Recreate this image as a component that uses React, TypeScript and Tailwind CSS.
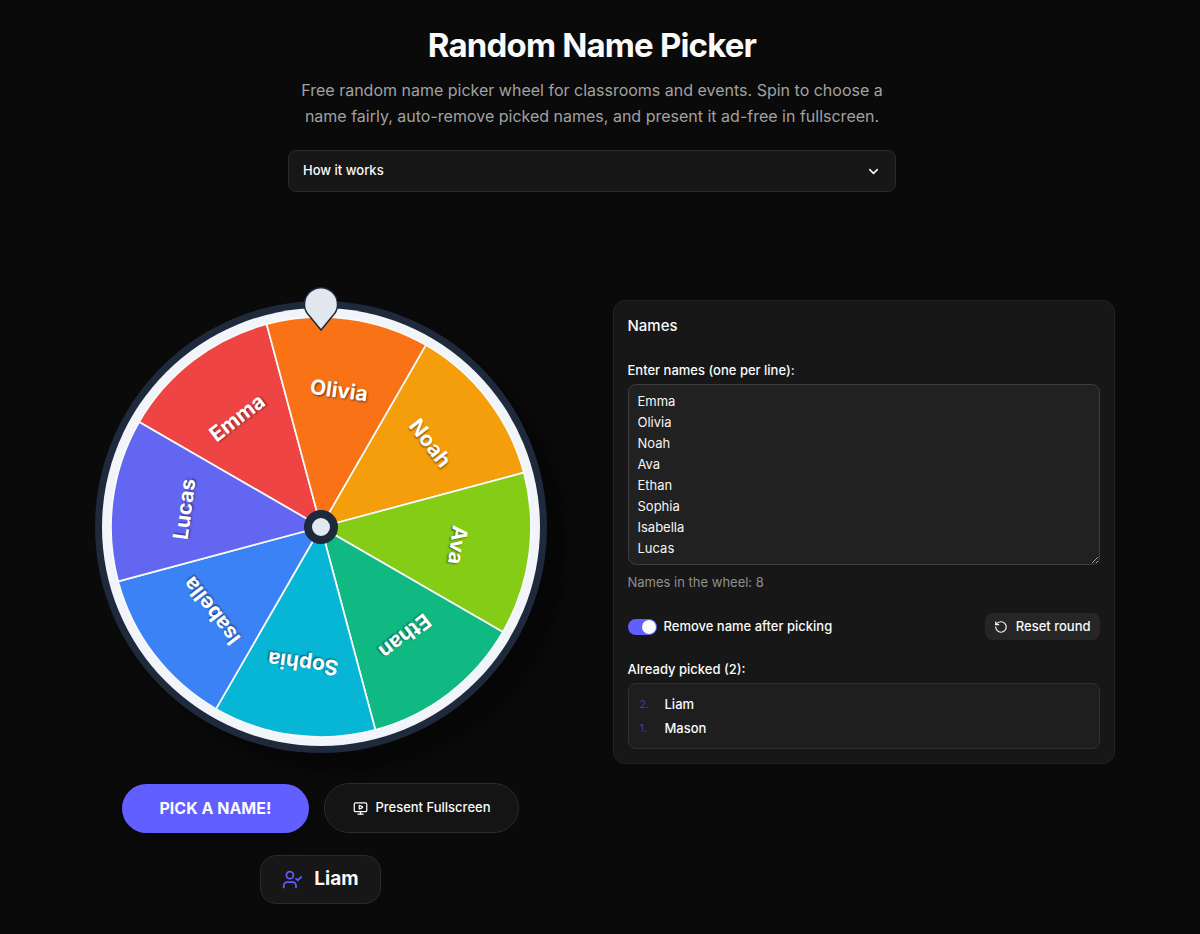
import React, { useState } from "react";
import { ChevronDown, MonitorPlay, RotateCcw, UserCheck } from "lucide-react";

const names = [
  { name: "Emma", color: "#ef4444" },
  { name: "Olivia", color: "#f97316" },
  { name: "Noah", color: "#f59e0b" },
  { name: "Ava", color: "#84cc16" },
  { name: "Ethan", color: "#10b981" },
  { name: "Sophia", color: "#06b6d4" },
  { name: "Isabella", color: "#3b82f6" },
  { name: "Lucas", color: "#6366f1" },
];

const picked = ["Mason", "Liam"];

// point on a circle, 0deg is up and the angle grows clockwise
const point = (angle: number, r: number) => {
  const rad = ((angle - 90) * Math.PI) / 180;
  return `${(r * Math.cos(rad)).toFixed(2)} ${(r * Math.sin(rad)).toFixed(2)}`;
};

const Wheel = () => {
  const step = 360 / names.length;
  const start = -60;
  return (
    <svg
      viewBox="-226 -226 452 452"
      className="w-full max-w-[452px] overflow-visible"
      role="img"
      aria-label="Name wheel"
    >
      <circle
        r="226"
        fill="#1e293b"
        className="drop-shadow-[20px_18px_6px_rgba(0,0,0,0.4)]"
      />
      <circle r="219" fill="#f1f5f9" />
      {names.map(({ name, color }, i) => {
        const from = start + i * step;
        const mid = from + step / 2;
        return (
          <g key={name}>
            <path
              d={`M0 0L${point(from, 210)}A210 210 0 0 1 ${point(from + step, 210)}Z`}
              fill={color}
              stroke="#f8fafc"
              strokeWidth="1.7"
            />
            <g transform={`rotate(${mid})`}>
              <text
                y="-138"
                textAnchor="middle"
                dominantBaseline="central"
                fill="#fff"
                className="text-[21px] font-bold [text-shadow:1px_1px_2px_rgba(0,0,0,0.5)]"
              >
                {name}
              </text>
            </g>
          </g>
        );
      })}
      <circle r="13" fill="#e2e8f0" stroke="#1e293b" strokeWidth="8" />
      <path
        d="M0 -197L-14 -214A16.5 16.5 0 1 1 14 -214Z"
        fill="#e2e8f0"
        stroke="#1e293b"
        strokeWidth="1.5"
      />
    </svg>
  );
};

const NamesCard = () => {
  const [text, setText] = useState(names.map((n) => n.name).join("\n"));
  return (
    <div className="self-start rounded-xl border border-[#222222] bg-[#171717] p-3.5">
      <h2 className="text-[15px] leading-[22px] font-medium">Names</h2>
      <label
        htmlFor="names"
        className="mt-6 block text-[13px] leading-[18px] font-medium"
      >
        Enter names (one per line):
      </label>
      <textarea
        id="names"
        value={text}
        onChange={(e) => setText(e.target.value)}
        className="mt-[5px] block h-[181px] w-full overflow-hidden rounded-lg border border-[#3d3d3d] bg-[#212121] px-[9px] py-1.5 text-[13px] leading-[21px] text-[#f5f5f5] outline-none"
      />
      <p className="mt-2 text-[13px] leading-[18px] text-[#8f8f8f]">
        Names in the wheel: {names.length}
      </p>
      <div className="mt-[22px] flex items-center justify-between">
        <label className="flex items-center gap-[7px] text-[13px] font-medium">
          <span className="relative flex">
            <input
              type="checkbox"
              role="switch"
              defaultChecked
              className="peer h-4 w-[29px] appearance-none rounded-full bg-[#3a3a3a] checked:bg-[#615fff]"
            />
            <span className="pointer-events-none absolute top-px left-px size-3.5 rounded-full bg-[#fafafa] peer-checked:left-3.5" />
          </span>
          Remove name after picking
        </label>
        <button className="flex h-[27px] items-center gap-2 rounded-lg bg-[#262626] px-[9px] text-[13px] font-medium">
          <RotateCcw className="size-3.5" />
          Reset round
        </button>
      </div>
      <h3 className="mt-5 text-[13px] leading-[18px] font-medium">
        Already picked ({picked.length}):
      </h3>
      <ol
        reversed
        className="mt-[5px] rounded-lg border border-[#303030] bg-[#1e1e1e] px-[11px] py-2 text-[13px] leading-6 font-medium"
      >
        {[...picked].reverse().map((name, i) => (
          <li key={name} className="flex items-center">
            <span className="w-[25px] text-[11px] font-normal text-[#3d3bb0]">
              {picked.length - i}.
            </span>
            {name}
          </li>
        ))}
      </ol>
    </div>
  );
};

const App = () => {
  return (
    <div className="min-h-screen bg-[#0a0a0a] pr-4 font-['Inter',sans-serif] text-[#fafafa]">
      <header className="mx-auto flex max-w-[608px] flex-col items-center pt-6 text-center">
        <h1 className="text-[33px] leading-[42px] font-bold tracking-tight">
          Random Name Picker
        </h1>
        <p className="mt-[11px] text-[16px] leading-[26px] text-[#a1a1a1]">
          Free random name picker wheel for classrooms and events. Spin to
          choose a name fairly, auto-remove picked names, and present it ad-free
          in fullscreen.
        </p>
        <button className="mt-[21px] flex h-[42px] w-full items-center justify-between rounded-lg border border-[#2a2a2a] bg-[#171717] px-3.5 text-[13px] font-medium">
          How it works
          <ChevronDown className="size-[15px]" strokeWidth={2.5} />
        </button>
      </header>
      <main className="mx-auto mt-[108px] grid max-w-[1045px] grid-cols-2 gap-[41px]">
        <section className="flex flex-col items-center pt-px">
          <Wheel />
          <div className="mt-[30px] flex items-center gap-[15px]">
            <button className="h-[49px] rounded-full bg-[#615fff] px-[38px] text-[16px] font-bold shadow-lg">
              PICK A NAME!
            </button>
            <button className="flex h-[50px] items-center gap-[7px] rounded-full border border-[#2c2c2c] bg-[#141414] px-7 text-[13px] font-medium">
              <MonitorPlay className="size-[15px]" />
              Present Fullscreen
            </button>
          </div>
          <output className="mt-[22px] flex h-[49px] items-center gap-[11px] rounded-2xl border border-[#2a2a2a] bg-[#171717] px-[21px] text-[19px] font-bold">
            <UserCheck className="size-[21px] text-[#615fff]" />
            Liam
          </output>
        </section>
        <NamesCard />
      </main>
    </div>
  );
};

export default App;
